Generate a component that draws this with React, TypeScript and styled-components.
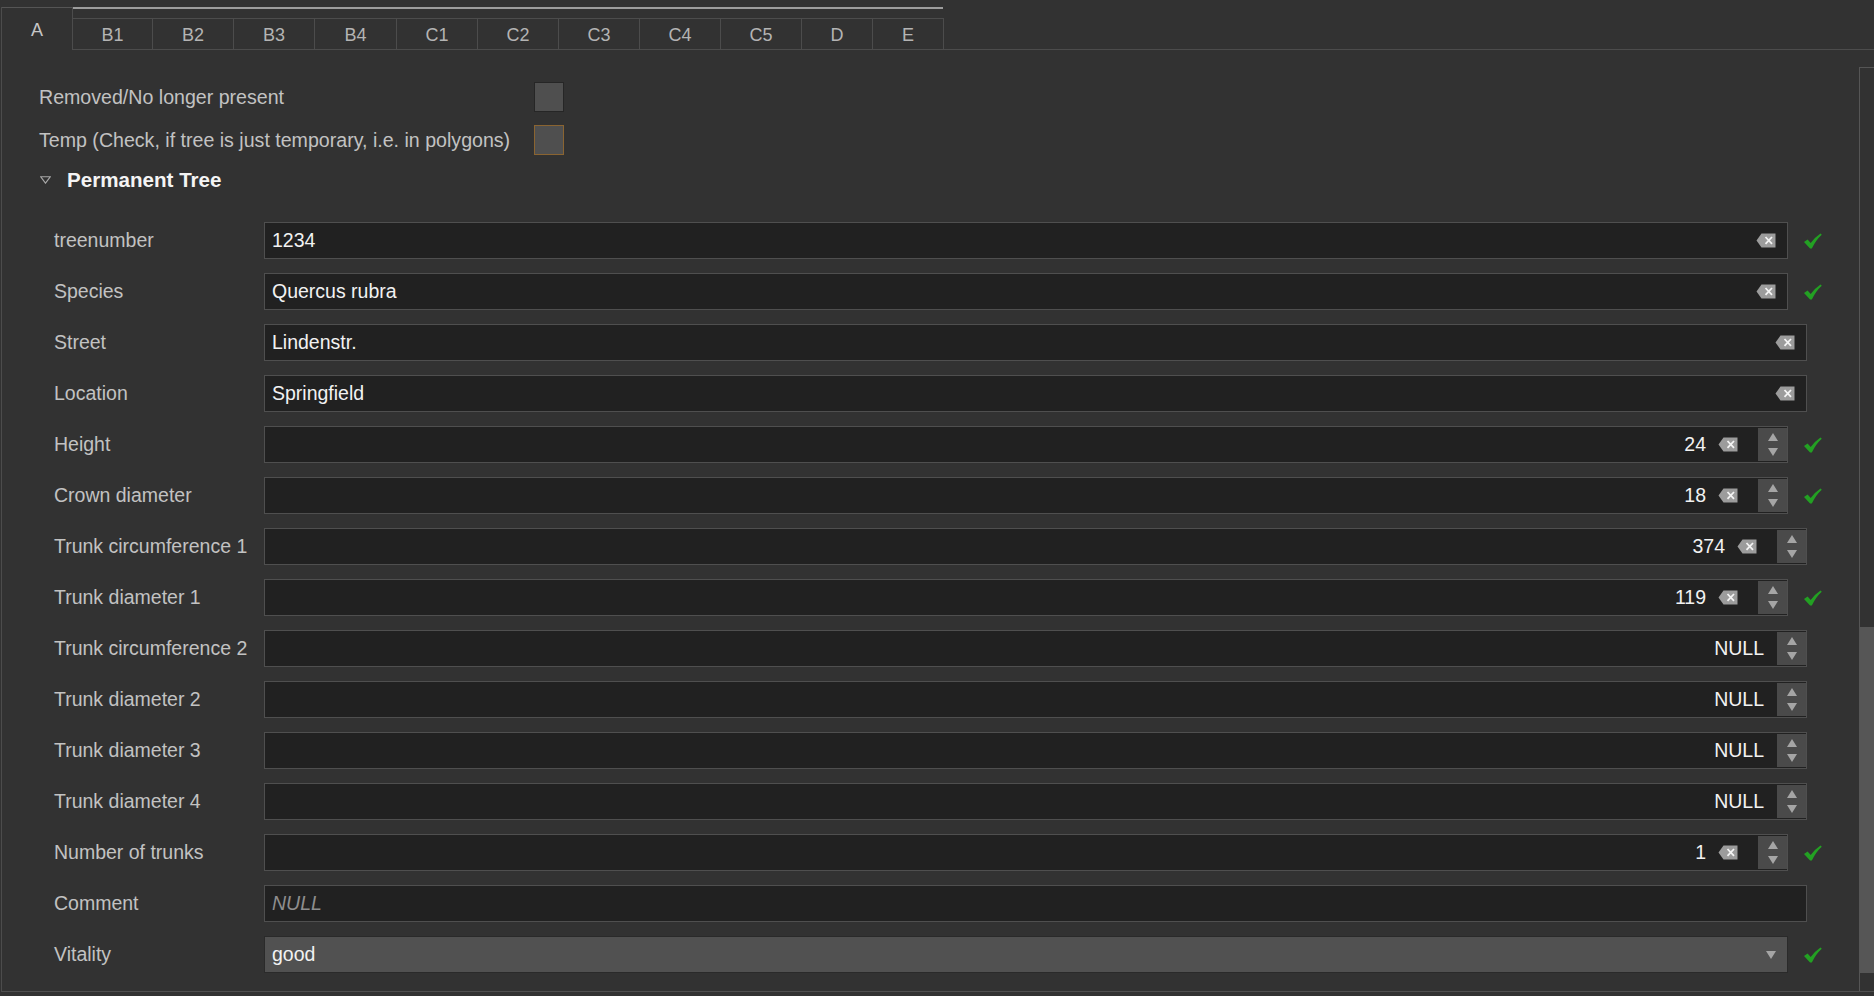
import React from 'react';
import styled, { createGlobalStyle } from 'styled-components';

const GlobalStyle = createGlobalStyle`
  html, body { margin: 0; padding: 0; background: #323232; }
  body { font-family: "Liberation Sans", Arial, sans-serif; overflow: hidden; }
  #root { height: 996px; }
  * { box-sizing: border-box; }
`;

const Page = styled.div`
  margin: 7px 0 0 1px;
  height: 985px;
  border-left: 1px solid #4c4c4c;
  border-bottom: 1px solid #4f4f4f;
  display: flex;
  flex-direction: column;
`;

const TabBar = styled.div`
  display: flex;
  height: 43px;
  flex-shrink: 0;
`;

const SelectedTab = styled.div`
  width: 71px;
  height: 43px;
  border-top: 1px solid #555;
  border-right: 1px solid #4c4c4c;
  display: flex;
  align-items: center;
  justify-content: center;
  padding-top: 2px;
  color: #c6c6c6;
  font-size: 18px;
`;

const TabArea = styled.div`
  flex: 1;
  display: flex;
  flex-direction: column;
  border-bottom: 1px solid #4c4c4c;
`;

const TopLine = styled.div`
  width: 870px;
  height: 2px;
  background: #9d9d9d;
  margin-bottom: 9px;
`;

const TabRow = styled.div`
  display: flex;
  height: 31px;
`;

const Tab = styled.div<{ $w: number }>`
  width: ${(p) => p.$w}px;
  height: 31px;
  border-top: 1px solid #4c4c4c;
  border-right: 1px solid #4c4c4c;
  display: flex;
  align-items: center;
  justify-content: center;
  padding-top: 2px;
  color: #b4b4b4;
  font-size: 18px;
`;

const Body = styled.div`
  flex: 1;
  display: flex;
  margin-top: 17px;
  min-height: 0;
`;

const Content = styled.div`
  flex: 1;
  overflow: hidden;
  padding-top: 15px;
`;

const ScrollBar = styled.div`
  width: 15px;
  border-left: 1px solid #555;
  border-top: 1px solid #555;
  display: flex;
  flex-direction: column;
`;

const ScrollHandle = styled.div`
  margin-top: 559px;
  height: 346px;
  background: #565656;
`;

const TopRow = styled.div`
  display: flex;
  align-items: center;
  height: 30px;
  padding-left: 37px;
  margin-bottom: 13px;
`;

const TopLabel = styled.div`
  width: 495px;
  color: #c2c2c2;
  font-size: 19.6px;
  white-space: nowrap;
`;

const CheckBox = styled.div<{ $focus?: boolean }>`
  width: 30px;
  height: 30px;
  background: #4f4f4f;
  border: 1px solid ${(p) => (p.$focus ? '#8a6431' : '#262626')};
`;

const SectionHeader = styled.div`
  display: flex;
  align-items: center;
  height: 24px;
  padding-left: 38px;
  color: #f4f4f4;
  font-size: 20.6px;
  font-weight: bold;
  gap: 16px;
`;

const Group = styled.div`
  display: flex;
  flex-direction: column;
  gap: 14px;
  padding: 30px 0 0 52px;
`;

const FieldRow = styled.div`
  display: flex;
  align-items: center;
  height: 37px;
  padding-right: 37px;
`;

const Label = styled.div`
  width: 210px;
  flex-shrink: 0;
  color: #c2c2c2;
  font-size: 19.5px;
  white-space: nowrap;
`;

const FieldBox = styled.div<{ $check: boolean; $combo?: boolean }>`
  flex: 1;
  height: 37px;
  margin-right: ${(p) => (p.$check ? 0 : 15)}px;
  background: ${(p) => (p.$combo ? '#515151' : '#212121')};
  border: 1px solid ${(p) => (p.$combo ? '#2a2a2a' : '#4f4f4f')};
  display: flex;
  align-items: center;
  padding-left: 7px;
  padding-right: ${(p) => (p.$combo ? 11 : 0)}px;
`;

const Value = styled.div<{ $right?: boolean; $placeholder?: boolean }>`
  flex: 1;
  color: ${(p) => (p.$placeholder ? '#8e8e8e' : '#f2f2f2')};
  font-style: ${(p) => (p.$placeholder ? 'italic' : 'normal')};
  font-size: 19.5px;
  text-align: ${(p) => (p.$right ? 'right' : 'left')};
  white-space: nowrap;
`;

const ClearWrap = styled.div<{ $mr: number }>`
  display: flex;
  margin-left: 12px;
  margin-right: ${(p) => p.$mr}px;
`;

const Spin = styled.div<{ $gap: number }>`
  width: 29px;
  height: 33px;
  margin-left: ${(p) => p.$gap}px;
  background: #4a4a4a;
  display: flex;
  flex-direction: column;
  align-items: center;
  justify-content: center;
  gap: 7px;
`;

const CheckSlot = styled.div`
  width: 34px;
  flex-shrink: 0;
  display: flex;
  justify-content: flex-end;
`;

const ClearIcon = () => (
  <svg width="20" height="15" viewBox="0 0 20 15">
    <path d="M5.5 0.5 H19.5 V14.5 H5.5 L0.5 7.5 Z" fill="#9c9c9c" />
    <path d="M9.5 4 L16 10.8 M16 4 L9.5 10.8" stroke="#f4f4f4" strokeWidth="1.8" />
  </svg>
);

const UpTri = () => (
  <svg width="10" height="8" viewBox="0 0 10 8">
    <path d="M0 8 L5 0 L10 8 Z" fill="#a5a5a5" />
  </svg>
);

const DownTri = () => (
  <svg width="10" height="8" viewBox="0 0 10 8">
    <path d="M0 0 L10 0 L5 8 Z" fill="#a5a5a5" />
  </svg>
);

const CheckMark = () => (
  <svg width="18" height="16" viewBox="0 0 17 15">
    <path
      d="M0 8.4 L3.4 6 L6.3 9.3 Q10.5 3.8 15.6 0.4 L16.8 1.6 Q11.2 6.6 7.4 14.6 L5.7 14.6 Z"
      fill="#23a023"
    />
  </svg>
);

const SectionTri = () => (
  <svg width="11" height="8" viewBox="0 0 11 8">
    <path d="M0.8 0.8 L10.2 0.8 L5.5 7.2 Z" fill="none" stroke="#a8a8a8" strokeWidth="1.1" />
  </svg>
);

type Field =
  | { kind: 'text'; label: string; value: string; check: boolean }
  | { kind: 'spin'; label: string; value: string; check: boolean; clear: boolean }
  | { kind: 'placeholder'; label: string; value: string; check: boolean }
  | { kind: 'combo'; label: string; value: string; check: boolean };

const fields: Field[] = [
  { kind: 'text', label: 'treenumber', value: '1234', check: true },
  { kind: 'text', label: 'Species', value: 'Quercus rubra', check: true },
  { kind: 'text', label: 'Street', value: 'Lindenstr.', check: false },
  { kind: 'text', label: 'Location', value: 'Springfield', check: false },
  { kind: 'spin', label: 'Height', value: '24', check: true, clear: true },
  { kind: 'spin', label: 'Crown diameter', value: '18', check: true, clear: true },
  { kind: 'spin', label: 'Trunk circumference 1', value: '374', check: false, clear: true },
  { kind: 'spin', label: 'Trunk diameter 1', value: '119', check: true, clear: true },
  { kind: 'spin', label: 'Trunk circumference 2', value: 'NULL', check: false, clear: false },
  { kind: 'spin', label: 'Trunk diameter 2', value: 'NULL', check: false, clear: false },
  { kind: 'spin', label: 'Trunk diameter 3', value: 'NULL', check: false, clear: false },
  { kind: 'spin', label: 'Trunk diameter 4', value: 'NULL', check: false, clear: false },
  { kind: 'spin', label: 'Number of trunks', value: '1', check: true, clear: true },
  { kind: 'placeholder', label: 'Comment', value: 'NULL', check: false },
  { kind: 'combo', label: 'Vitality', value: 'good', check: true },
];

const tabs: { name: string; w: number }[] = [
  { name: 'B1', w: 80 },
  { name: 'B2', w: 81 },
  { name: 'B3', w: 81 },
  { name: 'B4', w: 82 },
  { name: 'C1', w: 81 },
  { name: 'C2', w: 81 },
  { name: 'C3', w: 81 },
  { name: 'C4', w: 81 },
  { name: 'C5', w: 81 },
  { name: 'D', w: 71 },
  { name: 'E', w: 71 },
];

const FieldControl = ({ f }: { f: Field }) => {
  if (f.kind === 'text') {
    return (
      <FieldBox $check={f.check}>
        <Value>{f.value}</Value>
        <ClearWrap $mr={11}>
          <ClearIcon />
        </ClearWrap>
      </FieldBox>
    );
  }
  if (f.kind === 'spin') {
    return (
      <FieldBox $check={f.check}>
        <Value $right>{f.value}</Value>
        {f.clear && (
          <ClearWrap $mr={0}>
            <ClearIcon />
          </ClearWrap>
        )}
        <Spin $gap={f.clear ? 20 : 13}>
          <UpTri />
          <DownTri />
        </Spin>
      </FieldBox>
    );
  }
  if (f.kind === 'placeholder') {
    return (
      <FieldBox $check={f.check}>
        <Value $placeholder>{f.value}</Value>
      </FieldBox>
    );
  }
  return (
    <FieldBox $check={f.check} $combo>
      <Value>{f.value}</Value>
      <DownTri />
    </FieldBox>
  );
};

export default function App() {
  return (
    <>
      <GlobalStyle />
      <Page>
        <TabBar>
          <SelectedTab>A</SelectedTab>
          <TabArea>
            <TopLine />
            <TabRow>
              {tabs.map((t) => (
                <Tab key={t.name} $w={t.w}>
                  {t.name}
                </Tab>
              ))}
            </TabRow>
          </TabArea>
        </TabBar>
        <Body>
          <Content>
            <TopRow>
              <TopLabel>Removed/No longer present</TopLabel>
              <CheckBox />
            </TopRow>
            <TopRow>
              <TopLabel>Temp (Check, if tree is just temporary, i.e. in polygons)</TopLabel>
              <CheckBox $focus />
            </TopRow>
            <SectionHeader>
              <SectionTri />
              <span>Permanent Tree</span>
            </SectionHeader>
            <Group>
              {fields.map((f) => (
                <FieldRow key={f.label}>
                  <Label>{f.label}</Label>
                  <FieldControl f={f} />
                  {f.check && (
                    <CheckSlot>
                      <CheckMark />
                    </CheckSlot>
                  )}
                </FieldRow>
              ))}
            </Group>
          </Content>
          <ScrollBar>
            <ScrollHandle />
          </ScrollBar>
        </Body>
      </Page>
    </>
  );
}
